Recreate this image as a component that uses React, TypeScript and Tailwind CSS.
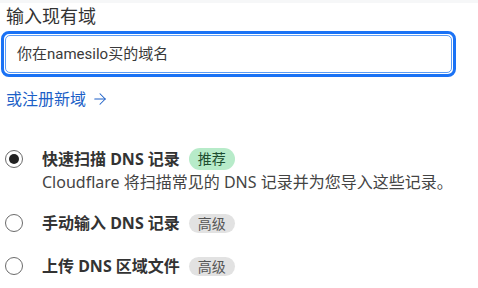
import { ArrowRight } from "lucide-react";

const font = { fontFamily: '"Noto Sans", "Noto Sans CJK SC", sans-serif' };
const inputFont = { fontFamily: 'Roboto, "Noto Sans CJK SC", sans-serif' };

function Badge({ text, tone }: { text: string; tone: "green" | "gray" }) {
  return (
    <span
      className={
        tone === "green"
          ? "rounded-full bg-[#b7ebc9] text-[#1d4d2f] px-[9px] h-[22px] leading-[22px] text-[14px]"
          : "rounded-full bg-[#e2e2e2] text-[#555] px-[9px] h-[22px] leading-[22px] text-[14px]"
      }
    >
      {text}
    </span>
  );
}

function Radio({ checked }: { checked?: boolean }) {
  return (
    <span className="w-[18px] h-[18px] rounded-full border border-[#6b6b6b] flex items-center justify-center shrink-0">
      {checked && <span className="w-[10px] h-[10px] rounded-full bg-[#222]" />}
    </span>
  );
}

export default function App() {
  return (
    <div className="w-[478px] h-[288px] bg-white overflow-hidden text-[#333]" style={font}>
      <div className="h-[3px] bg-[#f6f7f8]" />
      <div className="pl-[6px] pt-[1px] text-[18px] leading-[24px]">输入现有域</div>
      <div className="mt-[3px] ml-[1px] w-[455px] h-[46px] rounded-[8px] border-[3px] border-[#1a72f5] p-[1px]">
        <div
          className="w-full h-full rounded-[5px] border border-[#5c9cf5] flex items-center pl-[11px] text-[15px] text-[#3a3a3a]"
          style={inputFont}
        >
          你在namesilo买的域名
        </div>
      </div>
      <div className="mt-[12px] pl-[6px] flex items-center gap-[5px] text-[16px] text-[#1c5fc7] leading-[20px]">
        <span>或注册新域</span>
        <ArrowRight size={18} strokeWidth={1.4} />
      </div>

      <div className="mt-[39px] flex flex-col">
        <div className="flex items-start">
          <div className="w-[42px] pl-[5px] pt-[2px]">
            <Radio checked />
          </div>
          <div className="flex flex-col">
            <div className="flex items-center gap-[9px]">
              <span className="font-bold text-[16px] leading-[22px] text-[#333]">快速扫描 DNS 记录</span>
              <Badge text="推荐" tone="green" />
            </div>
            <div className="mt-[1px] text-[16px] leading-[22px] text-[#444]">
              Cloudflare 将扫描常见的 DNS 记录并为您导入这些记录。
            </div>
          </div>
        </div>
        <div className="flex items-center mt-[18px]">
          <div className="w-[42px] pl-[5px]">
            <Radio />
          </div>
          <span className="font-bold text-[16px] leading-[22px] text-[#333]">手动输入 DNS 记录</span>
          <span className="ml-[9px]"><Badge text="高级" tone="gray" /></span>
        </div>
        <div className="flex items-center mt-[19px]">
          <div className="w-[42px] pl-[5px]">
            <Radio />
          </div>
          <span className="font-bold text-[16px] leading-[22px] text-[#333]">上传 DNS 区域文件</span>
          <span className="ml-[9px]"><Badge text="高级" tone="gray" /></span>
        </div>
      </div>
    </div>
  );
}
